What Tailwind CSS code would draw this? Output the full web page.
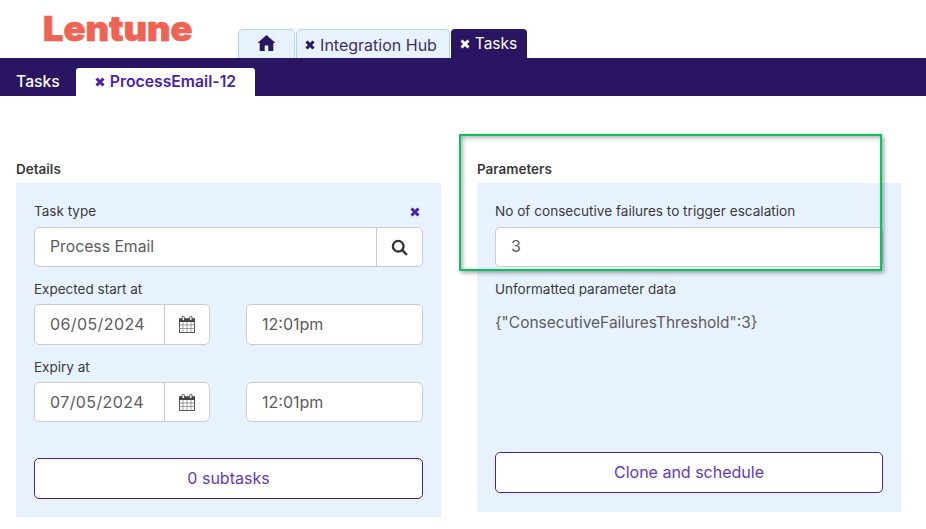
<!DOCTYPE html>
<html lang="en">
<head>
    <meta charset="UTF-8">
    <title>Lentune</title>
    <script src="https://cdn.jsdelivr.net/npm/@tailwindcss/browser@4"></script>
</head>
<body class="relative h-[529px] w-[926px] overflow-hidden bg-white font-['Inter',sans-serif] text-[#3a3a3a]">
<header class="flex h-[58px] items-end">
    <div class="mb-[9px] ml-[43px] w-[195px] origin-left scale-x-[1.065] font-['Inter',sans-serif] text-[34px] leading-[40px] font-black tracking-[0px] text-[#f06352] [-webkit-text-stroke:0.7px_#f06352]">Lentune</div>
    <nav class="flex h-[29px] gap-[1px] text-[16px]">
        <a class="flex w-[57px] items-center justify-center rounded-t-[5px] border border-b-0 border-[#b3d4f5] bg-[#e8f2ff] pb-[2px] text-[#2a1562]">
            <svg class="h-[16px] w-[19px]" viewBox="0 0 18 16" fill="currentColor"><path d="M9 0 L18 8 L15.8 8 L15.8 16 L10.8 16 L10.8 10.5 L7.2 10.5 L7.2 16 L2.2 16 L2.2 8 L0 8 Z"/></svg>
        </a>
        <a class="flex w-[154px] items-center justify-center gap-[5px] rounded-t-[5px] border border-b-0 border-[#b3d4f5] bg-[#e8f2ff] pt-[1px] pr-[4px] text-[#3d3260]">
            <svg class="h-[10px] w-[10px] text-[#2a1562]" viewBox="0 0 10 10" fill="none" stroke="currentColor" stroke-width="3"><path d="M1.5 1.5 L8.5 8.5 M8.5 1.5 L1.5 8.5"/></svg>
            Integration Hub
        </a>
        <a class="flex w-[76px] items-center justify-center gap-[5px] rounded-t-[4px] bg-[#2a1562] pr-[1px] text-[15.5px] text-white">
            <svg class="h-[10px] w-[10px]" viewBox="0 0 10 10" fill="none" stroke="currentColor" stroke-width="3"><path d="M1.5 1.5 L8.5 8.5 M8.5 1.5 L1.5 8.5"/></svg>
            Tasks
        </a>
    </nav>
</header>

<div class="flex h-[38px] items-end bg-[#2a1562] text-[15.75px]">
    <a class="flex h-[28px] w-[76px] items-center pl-[16px] font-medium text-white">Tasks</a>
    <a class="flex h-[28px] w-[179px] items-center justify-center gap-[5px] rounded-t-[3px] bg-white font-semibold text-[#4a1fb0]">
        <svg class="h-[10px] w-[10px]" viewBox="0 0 10 10" fill="none" stroke="currentColor" stroke-width="3"><path d="M1.5 1.5 L8.5 8.5 M8.5 1.5 L1.5 8.5"/></svg>
        ProcessEmail-12
    </a>
</div>

<main class="flex gap-[36px] pt-[65px] pl-[16px]">
    <section class="w-[425px]">
        <h2 class="mb-[6px] h-[16px] text-[13.5px] leading-[16px] font-semibold">Details</h2>
        <div class="h-[334px] bg-[#e8f2ff] px-[18px] pt-[19px]">
            <div class="mb-[6px] flex h-[19px] items-center justify-between text-[13.5px]">
                <span>Task type</span>
                <svg class="mr-[3px] h-[10px] w-[10px] text-[#4a1fb0]" viewBox="0 0 10 10" fill="none" stroke="currentColor" stroke-width="3"><path d="M1.5 1.5 L8.5 8.5 M8.5 1.5 L1.5 8.5"/></svg>
            </div>
            <div class="flex h-[40px] rounded-[5px] border border-[#ccc] bg-white text-[15.75px] text-[#5c5c5c]">
                <div class="flex flex-1 items-center pl-[15px]">Process Email</div>
                <div class="flex w-[46px] items-center justify-center border-l border-[#ccc] text-[#333]">
                    <svg class="h-[17px] w-[17px]" viewBox="0 0 16 16" fill="none" stroke="currentColor" stroke-width="2.2"><circle cx="6.8" cy="6.8" r="5"/><path d="M10.5 10.5 L15 15"/></svg>
                </div>
            </div>

            <div class="mt-[12px] mb-[5px] h-[20px] text-[13.5px] leading-[20px]">Expected start at</div>
            <div class="flex h-[41px] justify-between text-[16px] text-[#5c5c5c]">
                <div class="flex w-[176px] rounded-[5px] border border-[#ccc] bg-white">
                    <div class="flex flex-1 items-center pb-[2px] pl-[15px] tracking-[0.4px]">06/05/2024</div>
                    <div class="flex w-[45px] items-center justify-center border-l border-[#ccc] text-[#444]">
                        <svg class="h-[17px] w-[16px]" viewBox="0 0 16 17" fill="none"><rect x="0.5" y="3" width="15" height="13.5" fill="#fff" stroke="#555"/><rect x="0" y="2.5" width="16" height="3.5" fill="#444"/><path d="M0.5 9 H15.5 M0.5 12.5 H15.5 M4 6 V16.5 M8 6 V16.5 M12 6 V16.5" stroke="#888" stroke-width="0.8"/><rect x="3" y="0.5" width="2.4" height="4" rx="1" fill="#fff" stroke="#444"/><rect x="10.6" y="0.5" width="2.4" height="4" rx="1" fill="#fff" stroke="#444"/></svg>
                    </div>
                </div>
                <div class="flex w-[177px] items-center rounded-[5px] border border-[#ccc] bg-white pb-[2px] pl-[15px]">12:01pm</div>
            </div>

            <div class="mt-[12px] mb-[5px] h-[20px] text-[13.5px] leading-[20px]">Expiry at</div>
            <div class="flex h-[40px] justify-between text-[16px] text-[#5c5c5c]">
                <div class="flex w-[176px] rounded-[5px] border border-[#ccc] bg-white">
                    <div class="flex flex-1 items-center pl-[15px] tracking-[0.4px]">07/05/2024</div>
                    <div class="flex w-[45px] items-center justify-center border-l border-[#ccc] text-[#444]">
                        <svg class="h-[17px] w-[16px]" viewBox="0 0 16 17" fill="none"><rect x="0.5" y="3" width="15" height="13.5" fill="#fff" stroke="#555"/><rect x="0" y="2.5" width="16" height="3.5" fill="#444"/><path d="M0.5 9 H15.5 M0.5 12.5 H15.5 M4 6 V16.5 M8 6 V16.5 M12 6 V16.5" stroke="#888" stroke-width="0.8"/><rect x="3" y="0.5" width="2.4" height="4" rx="1" fill="#fff" stroke="#444"/><rect x="10.6" y="0.5" width="2.4" height="4" rx="1" fill="#fff" stroke="#444"/></svg>
                    </div>
                </div>
                <div class="flex w-[177px] items-center rounded-[5px] border border-[#ccc] bg-white pl-[15px]">12:01pm</div>
            </div>

            <button class="mt-[36px] h-[41px] w-full rounded-[5px] border border-[#4a1fb0] bg-white pb-[2px] text-[16px] text-[#6238c6]">0 subtasks</button>
        </div>
    </section>

    <section class="w-[424px]">
        <h2 class="mb-[6px] h-[16px] text-[13.5px] leading-[16px] font-semibold">Parameters</h2>
        <div class="flex h-[329px] flex-col bg-[#e8f2ff] px-[18px] pt-[19px]">
            <div class="mb-[6px] h-[19px] text-[13.6px] leading-[19px]">No of consecutive failures to trigger escalation</div>
            <div class="flex h-[40px] items-center rounded-[5px] border border-[#ccc] bg-white pb-[2px] pl-[15px] text-[16px] text-[#5c5c5c]">3</div>
            <div class="mt-[12px] h-[20px] text-[13.5px] leading-[20px]">Unformatted parameter data</div>
            <div class="mt-[14px] text-[15.5px] leading-[20px] text-[#5c5c5c]">{"ConsecutiveFailuresThreshold":3}</div>
            <button class="mt-auto mb-[19px] h-[41px] w-full rounded-[5px] border border-[#4a1fb0] bg-white pb-[2px] text-[16px] text-[#6238c6]">Clone and schedule</button>
        </div>
    </section>
</main>

<!-- callout over the parameters panel -->
<div class="absolute top-[134px] left-[459px] h-[137px] w-[423px] border-2 border-[#0cc15f] shadow-[2px_2px_4px_rgba(0,0,0,0.35),inset_2px_2px_4px_rgba(0,0,0,0.3)]"></div>
</body>
</html>
